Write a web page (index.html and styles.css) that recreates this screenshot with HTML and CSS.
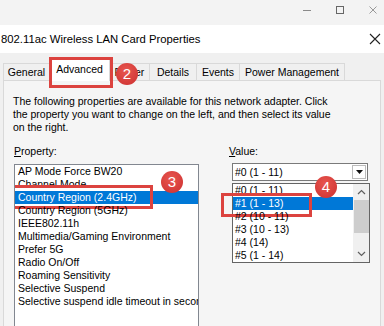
FILE: index.html
```html
<!DOCTYPE html>
<html lang="en">
  <head>
    <meta charset="UTF-8" />
    <meta name="viewport" content="width=device-width, initial-scale=1.0" />
    <link rel="stylesheet" href="styles.css">
  </head>
  <body>
    <!-- outer window buttons -->
    <div class="chrome">
      <span class="win-btn">
        <svg width="10" height="10" viewBox="0 0 10 10"><path d="M1 5.5h8" stroke="#8a8a8a" stroke-width="1"/></svg>
      </span>
      <span class="win-btn">
        <svg width="10" height="10" viewBox="0 0 10 10"><rect x="1.5" y="1.5" width="7" height="7" fill="none" stroke="#666" stroke-width="1"/></svg>
      </span>
      <span class="win-btn">
        <svg width="10" height="10" viewBox="0 0 10 10"><path d="M1.5 1.5l7 7M8.5 1.5l-7 7" stroke="#999" stroke-width="1"/></svg>
      </span>
    </div>

    <div class="titlebar">
      <span class="title">802.11ac Wireless LAN Card Properties</span>
      <svg class="close" width="12" height="12" viewBox="0 0 12 12"><path d="M1 1l10 10M11 1L1 11" stroke="#222" stroke-width="1.1"/></svg>
    </div>

    <div class="tabs">
      <div class="tab tab-general">General</div>
      <div class="tab tab-active">
        Advanced
        <span class="mark mark-tab"></span>
        <span class="badge badge-2">2</span>
      </div>
      <div class="tab tab-power">Power</div>
      <div class="tab tab-details">Details</div>
      <div class="tab tab-events">Events</div>
      <div class="tab tab-pm">Power Management</div>
    </div>

    <div class="panel">
      <p class="intro">
        The following properties are available for this network adapter. Click<br>
        the property you want to change on the left, and then select its value<br>
        on the right.
      </p>

      <div class="columns">
        <div class="col-prop">
          <div class="label"><u>P</u>roperty:</div>
          <div class="listbox">
            <div class="item">AP Mode Force BW20</div>
            <div class="item">Channel Mode</div>
            <div class="item selected">
              Country Region (2.4GHz)
              <span class="mark mark-prop"></span>
              <span class="badge badge-3">3</span>
            </div>
            <div class="item">Country Region (5GHz)</div>
            <div class="item">IEEE802.11h</div>
            <div class="item">Multimedia/Gaming Environment</div>
            <div class="item">Prefer 5G</div>
            <div class="item">Radio On/Off</div>
            <div class="item">Roaming Sensitivity</div>
            <div class="item">Selective Suspend</div>
            <div class="item">Selective suspend idle timeout in seconds</div>
          </div>
        </div>

        <div class="col-value">
          <div class="label"><u>V</u>alue:</div>
          <div class="combo">
            <span class="combo-text">#0 (1 - 11)</span>
            <span class="combo-btn">
              <svg width="7" height="4" viewBox="0 0 7 4"><path d="M0 0h7L3.5 4z" fill="#111"/></svg>
            </span>

            <div class="dropdown">
              <div class="options">
                <div class="opt">#0 (1 - 11)</div>
                <div class="opt selected">
                  #1 (1 - 13)
                  <span class="mark mark-value"></span>
                  <span class="badge badge-4">4</span>
                </div>
                <div class="opt">#2 (10 - 11)</div>
                <div class="opt">#3 (10 - 13)</div>
                <div class="opt">#4 (14)</div>
                <div class="opt">#5 (1 - 14)</div>
              </div>
              <div class="scrollbar">
                <svg class="arrow" width="9" height="6" viewBox="0 0 9 6"><path d="M1 5l3.5-3.5L8 5" fill="none" stroke="#606060" stroke-width="1.2"/></svg>
                <div class="thumb"></div>
                <svg class="arrow arrow-down" width="9" height="6" viewBox="0 0 9 6"><path d="M1 1l3.5 3.5L8 1" fill="none" stroke="#606060" stroke-width="1.2"/></svg>
              </div>
            </div>
          </div>
        </div>
      </div>
    </div>
  </body>
</html>
```

FILE: styles.css
```css
/* page */
body {
  margin: 0;
  width: 384px;
  height: 326px;
  overflow: hidden;
  background-color: #f0f0f0;
  font-family: "Liberation Sans", Arial, sans-serif;
  font-size: 10.5px;
  color: #000;
}

/* outer window buttons */
.chrome {
  height: 25px;
  display: flex;
  justify-content: flex-end;
  align-items: center;
  margin-right: -5px;
  padding-bottom: 6px;
  box-sizing: border-box;
  background-color: #f3f3f3;
}

.win-btn {
  width: 33px;
  display: flex;
  justify-content: center;
}

/* dialog title */
.titlebar {
  height: 28px;
  background-color: #fff;
  display: flex;
  align-items: center;
  justify-content: space-between;
  padding: 0 3px 0 1px;
}

.title {
  font-size: 11.3px;
}

/* tab strip */
.tabs {
  height: 27px;
  display: flex;
  align-items: flex-end;
  padding-left: 3px;
  box-sizing: border-box;
}

.tab {
  height: 17px;
  line-height: 16px;
  box-sizing: border-box;
  border: 1px solid #d9d9d9;
  border-bottom: none;
  border-left: none;
  background-color: #f0f0f0;
  text-align: center;
  position: relative;
}

.tab-general { width: 47px; border-left: 1px solid #d9d9d9; }
.tab-power { width: 40px; }
.tab-details { width: 47px; }
.tab-events { width: 43px; }
.tab-pm { width: 105px; }

.tab-active {
  width: 60px;
  height: 23px;
  line-height: 20px;
  margin-bottom: -1px;
  background-color: #fff;
  border-left: none;
  z-index: 2;
}

/* annotation boxes and numbers */
.mark {
  position: absolute;
  border: 3px solid #dc433f;
  box-sizing: border-box;
  pointer-events: none;
}

.mark-tab {
  left: -1px;
  top: -2px;
  width: 64px;
  height: 31px;
}

.badge {
  position: absolute;
  width: 22px;
  height: 22px;
  border-radius: 50%;
  background: radial-gradient(circle at 45% 35%, #e8564f, #cc2f2f);
  color: #fff;
  font-size: 15px;
  line-height: 22px;
  text-align: center;
  z-index: 3;
}

.badge-2 { left: 66px; top: 4px; }
.badge-3 { left: 146px; top: -20px; }
.badge-4 { left: 82px; top: -21px; }

/* content panel */
.panel {
  margin: 0 3px;
  height: 231px;
  overflow: hidden;
  border: 1px solid #d9d9d9;
  border-bottom: none;
  background-color: #f5f5f5;
  padding: 14px 9px 0 9px;
  position: relative;
  z-index: 1;
}

.intro {
  margin: 0;
  line-height: 13px;
}

.columns {
  display: flex;
  margin-top: 11px;
}

.label {
  line-height: 13px;
  margin-bottom: 6px;
}

/* property list */
.col-prop {
  width: 185px;
  margin-left: 1px;
}

.listbox {
  height: 170px;
  border: 1px solid #828790;
  background-color: #fff;
  overflow: hidden;
}

.item {
  height: 13px;
  line-height: 13px;
  padding-left: 3px;
  white-space: nowrap;
  position: relative;
}

.item.selected,
.opt.selected {
  background-color: #0078d7;
  color: #fff;
}

.mark-prop {
  left: -8px;
  top: -6px;
  width: 146px;
  height: 24px;
}

/* value combo */
.col-value {
  margin-left: 30px;
}

.col-value .label {
  margin-bottom: 5px;
}

.combo {
  margin-left: 3px;
  width: 136px;
  height: 18px;
  box-sizing: border-box;
  border: 1px solid #7a7a7a;
  background-color: #fff;
  display: flex;
  align-items: center;
  justify-content: space-between;
  position: relative;
}

.combo-text {
  padding-left: 2px;
}

.combo-btn {
  width: 14px;
  height: 14px;
  margin-right: 1px;
  box-sizing: border-box;
  border: 1px solid #bcbcbc;
  display: flex;
  align-items: center;
  justify-content: center;
}

.dropdown {
  position: absolute;
  left: -1px;
  top: 19px;
  width: 138px;
  height: 80px;
  box-sizing: border-box;
  border: 1px solid #646464;
  background-color: #fff;
  display: flex;
  z-index: 2;
}

.options {
  flex: 1;
}

.opt {
  height: 13px;
  line-height: 13px;
  padding-left: 2px;
  position: relative;
}

.mark-value {
  left: -12px;
  top: -4px;
  width: 91px;
  height: 24px;
}

.scrollbar {
  width: 16px;
  background-color: #f0f0f0;
  display: flex;
  flex-direction: column;
  align-items: center;
  padding: 5px 0 5px;
  box-sizing: border-box;
}

.thumb {
  width: 15px;
  height: 33px;
  margin-top: 5px;
  background-color: #cdcdcd;
}

.arrow-down {
  margin-top: auto;
}
```
